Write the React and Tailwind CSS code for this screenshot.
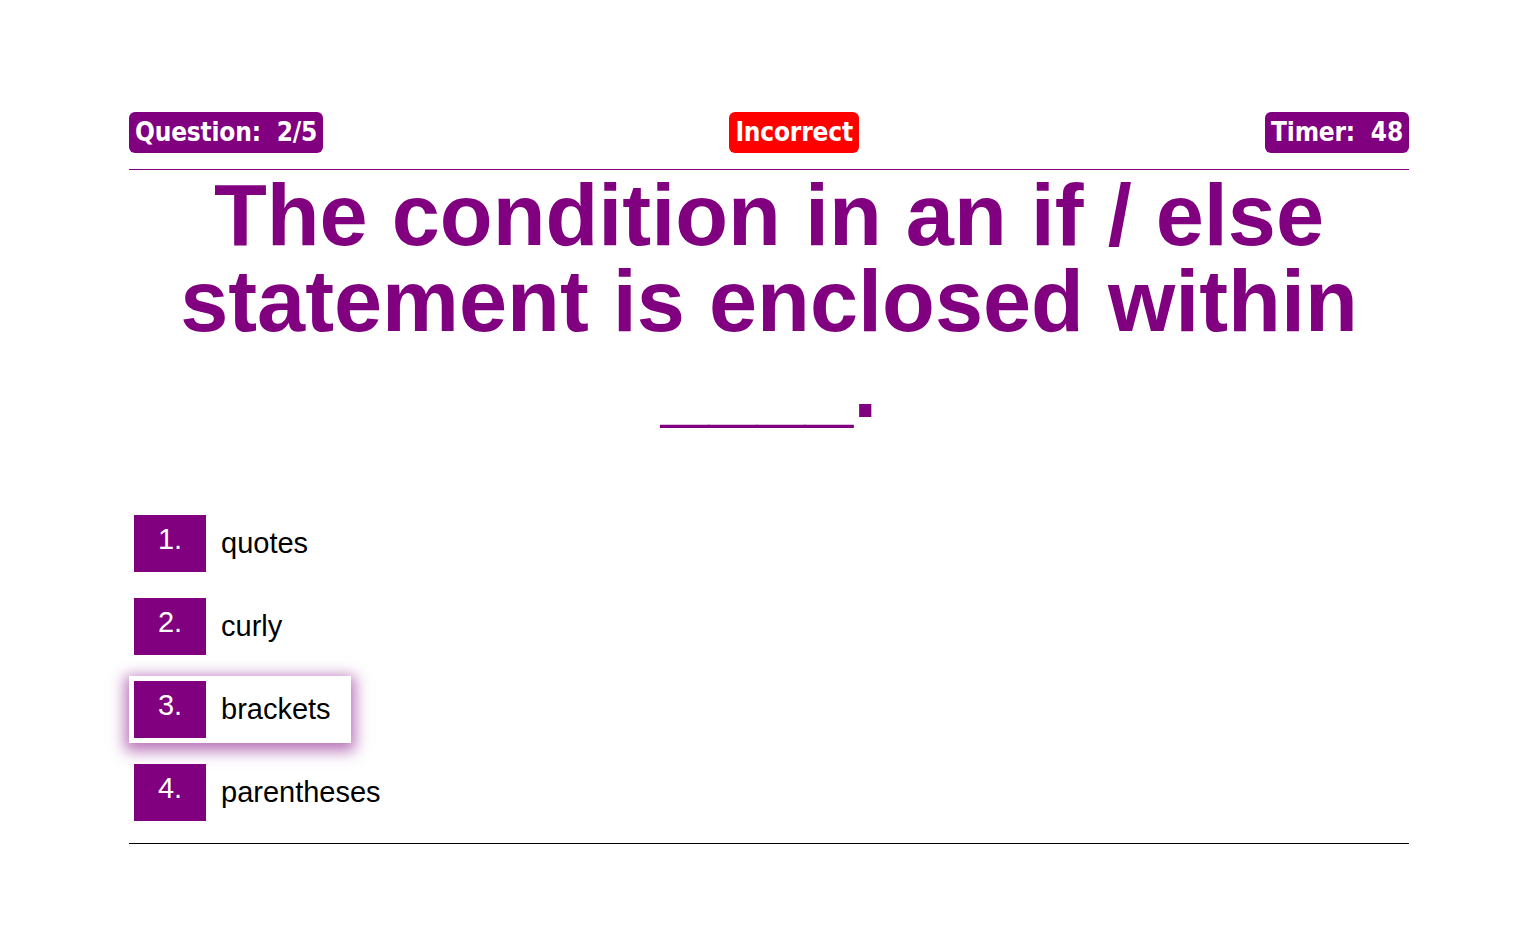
import React from 'react';

const options = ['quotes', 'curly', 'brackets', 'parentheses'];

export default function App() {
  const selected = 2;

  return (
    <div className="min-h-screen bg-white pt-[112px]" style={{ fontFamily: '"Liberation Sans", Arial, sans-serif' }}>
      <div className="mx-auto w-[1280px]">
        {/* Header */}
        <div
          className="flex items-center justify-between pb-4 border-b border-[#800080]"
          style={{ fontFamily: '"Liberation Sans Narrow", "DejaVu Sans Condensed", "Liberation Sans", sans-serif' }}
        >
          <div className="h-[41px] flex items-center px-[6px] rounded-md bg-[#800080] text-white text-[26px] font-bold tracking-[-0.2px] whitespace-pre">
            Question:  2/5
          </div>
          <div className="h-[41px] flex items-center px-[6px] rounded-md bg-[#ff0000] text-white text-[26px] font-bold tracking-[-0.2px]">
            Incorrect
          </div>
          <div className="h-[41px] flex items-center px-[6px] rounded-md bg-[#800080] text-white text-[26px] font-bold tracking-[-0.2px] whitespace-pre">
            Timer:  48
          </div>
        </div>

        {/* Question */}
        <h1 className="mt-[2px] text-center text-[#800080] text-[86.5px] leading-[86px] font-bold px-10">
          The condition in an if / else statement is enclosed within ____.
        </h1>

        {/* Options */}
        <ul className="mt-[80px] flex flex-col gap-4 pb-[17px] border-b border-black">
          {options.map((opt, i) => (
            <li
              key={opt}
              className={`self-start flex items-center p-[5px] pr-5 ${i === selected ? 'bg-white shadow-[0_4px_14px_4px_rgba(128,0,128,0.55)]' : ''}`}
            >
              <span className="w-[72px] h-[57px] bg-[#800080] text-white text-[29px] text-center pt-[3px]">
                {i + 1}.
              </span>
              <span className="ml-[15px] text-[29px] text-black">{opt}</span>
            </li>
          ))}
        </ul>
      </div>
    </div>
  );
}
